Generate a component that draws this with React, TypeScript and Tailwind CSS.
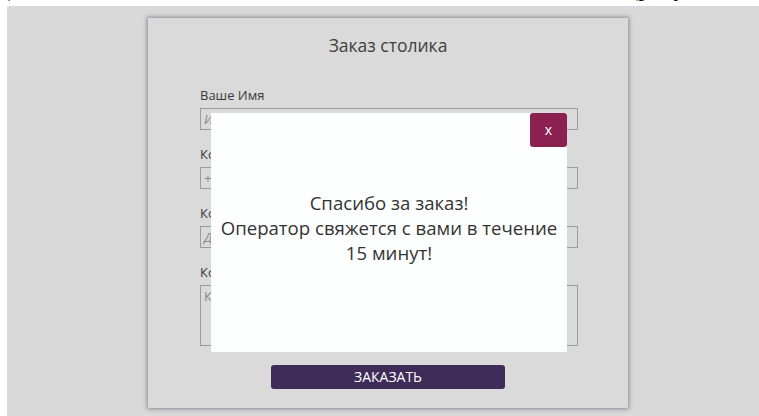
import React from 'react'

const fields = [
    { label: 'Ваше Имя', placeholder: 'Иван' },
    { label: 'Контактный телефон', placeholder: '+7 (___) ___-__-__' },
    { label: 'Количество гостей', placeholder: 'Дата и время' },
]

// thank-you popup shown over the booking form
const ThanksModal = () => (
    <div className="absolute left-[63px] top-[95px] w-[356px] h-[239px] bg-[#fdfefe] flex flex-col">
        <div className="flex justify-end">
            <button className="w-[37px] h-[34px] rounded-[3px] bg-[#8a2150] text-white text-[14px] leading-none">
                x
            </button>
        </div>
        <div className="mt-[43px] text-center text-[18.6px] leading-[25px] text-[#333]">
            <p>Спасибо за заказ!</p>
            <p>Оператор свяжется с вами в течение</p>
            <p>15 минут!</p>
        </div>
    </div>
)

export default function App() {
    return (
        <div className="w-[759px] h-[416px] bg-white flex flex-col overflow-hidden" style={{ fontFamily: '"Open Sans", "Noto Sans", sans-serif' }}>
            {/* tail of the document line above */}
            <div className="h-[6px] overflow-hidden shrink-0">
                <div className="flex -mt-[24px] text-[24px] leading-[24px] text-black whitespace-pre" style={{ fontFamily: '"Liberation Serif", serif' }}>
                    <span className="-ml-[2px]">д</span>
                    <span className="ml-[326px]">,</span>
                    <span className="ml-[288px]">(рису</span>
                </div>
            </div>
            <div className="flex-1 ml-[7px] bg-[#d9d9d9] pt-[12px]">
                <div className="relative ml-[141px] w-[480px] h-[390px] bg-[#dadada] shadow-[0_0_4px_1px_rgba(70,70,100,0.55)] px-[52px]">
                    <h1 className="pt-[15px] text-center text-[17.5px] leading-[24px] text-[#404040]">Заказ столика</h1>
                    <div className="mt-[29px] flex flex-col gap-[15px]">
                        {fields.map((f) => (
                            <div key={f.label} className="flex flex-col gap-[4px]">
                                <label className="text-[13px] leading-[18px] text-[#3a3a3a]">{f.label}</label>
                                <div className="w-[378px] h-[22px] border border-[#9c9c9c] px-[3px] text-[13px] leading-[20px] italic text-[#8a8a8a]">
                                    {f.placeholder}
                                </div>
                            </div>
                        ))}
                        <div className="flex flex-col gap-[4px]">
                            <label className="text-[13px] leading-[18px] text-[#3a3a3a]">Комментарий</label>
                            <div className="w-[378px] h-[61px] border border-[#9c9c9c] px-[3px] text-[13px] leading-[20px] text-[#8a8a8a]">
                                Комментарий к заказу
                            </div>
                        </div>
                    </div>
                    <button className="block mx-auto mt-[19px] w-[234px] h-[24px] rounded-[3px] bg-[#3e2b58] text-white text-[14px] leading-[24px]">
                        ЗАКАЗАТЬ
                    </button>
                    <ThanksModal />
                </div>
            </div>
        </div>
    )
}
